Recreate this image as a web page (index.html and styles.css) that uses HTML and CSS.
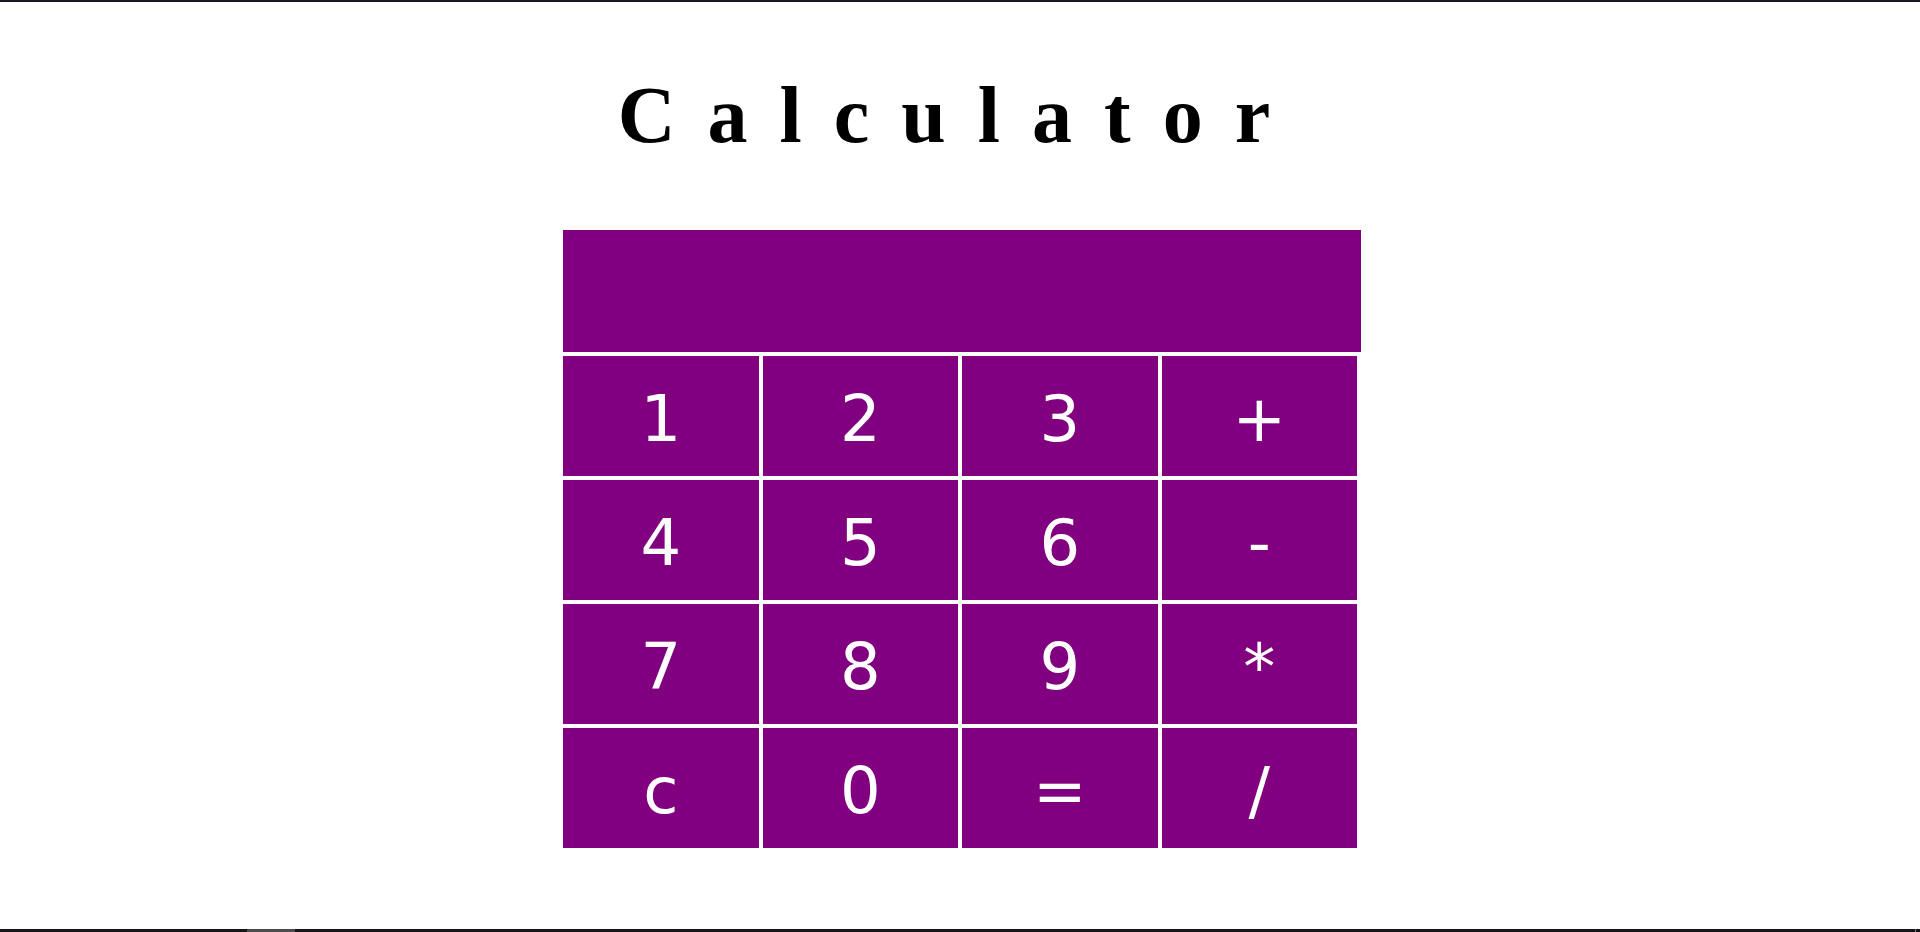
FILE: index.html
```html
<!DOCTYPE html>
<html lang="en">
<head>
<meta charset="utf-8">
<meta name="viewport" content="width=device-width, initial-scale=1">
<title>Calculator</title>
<link rel="stylesheet" href="styles.css">
</head>
<body class="page">
<main class="content">
<h1 class="title">Calculator</h1>
<form class="calculator">
<input class="display" type="text" aria-label="Result" readonly>
<div class="keys">
<button class="key" type="button">1</button>
<button class="key" type="button">2</button>
<button class="key" type="button">3</button>
<button class="key" type="button">+</button>
<button class="key" type="button">4</button>
<button class="key" type="button">5</button>
<button class="key" type="button">6</button>
<button class="key" type="button">-</button>
<button class="key" type="button">7</button>
<button class="key" type="button">8</button>
<button class="key" type="button">9</button>
<button class="key" type="button">*</button>
<button class="key" type="button">c</button>
<button class="key" type="button">0</button>
<button class="key" type="button">=</button>
<button class="key" type="button">/</button>
</div>
</form>
</main>
<footer class="edge"><span class="edge-active"></span><span class="edge-tick"></span></footer>
</body>
</html>
```
FILE: styles.css
```css
* {
  box-sizing: border-box;
}

.page {
  display: flex;
  flex-direction: column;
  min-height: 100vh;
  margin: 0;
  border-top: 2px solid #1b1722;
  background: #fff;
}

.content {
  flex: 1;
  padding-top: 68px;
}

.title {
  margin: 0 0 70px;
  font: bold 80px/90px "Liberation Serif", "Times New Roman", serif;
  letter-spacing: 32px;
  text-align: center;
  color: #000;
}

.calculator {
  display: flex;
  flex-direction: column;
  align-items: center;
  gap: 4px;
  padding-left: 4px;
}

.display,
.keys {
  width: 100%;
  max-width: 798px;
}

.display {
  height: 122px;
  padding: 0 16px;
  border: 0;
  background: #800080;
  color: #fff;
  font: 64px "DejaVu Sans", Tahoma, sans-serif;
  text-align: right;
}

.keys {
  display: grid;
  grid-template-columns: repeat(4, 1fr);
  gap: 4px;
  padding-right: 4px;
}

.key {
  height: 120px;
  padding: 6px 0 0;
  border: 0;
  background: #800080;
  color: #fff;
  font: 64px "DejaVu Sans", Tahoma, sans-serif;
}

.edge {
  display: flex;
  justify-content: space-between;
  height: 3px;
  padding: 0 4px 0 247px;
  background: #161417;
}

.edge-active {
  width: 48px;
  background: #4c4c4c;
}

.edge-tick {
  width: 1px;
  background: #777;
}
```
